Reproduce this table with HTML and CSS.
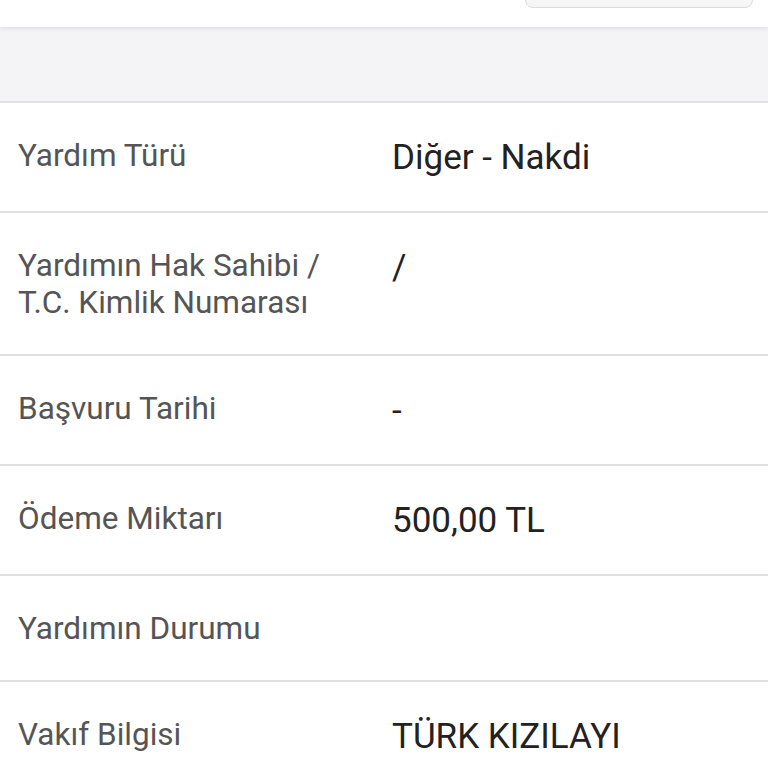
FILE: index.html
```html
<!DOCTYPE html>
<html lang="tr">
<head>
<meta charset="utf-8">
<link rel="stylesheet" href="styles.css">
</head>
<body>
<header class="topbar">
  <div class="topbar-button"></div>
</header>
<div class="band"></div>
<section class="details">
  <div class="row">
    <div class="label">Yardım Türü</div>
    <div class="value">Diğer - Nakdi</div>
  </div>
  <div class="row">
    <div class="label">Yardımın Hak Sahibi /<br>T.C. Kimlik Numarası</div>
    <div class="value">/</div>
  </div>
  <div class="row">
    <div class="label">Başvuru Tarihi</div>
    <div class="value">-</div>
  </div>
  <div class="row">
    <div class="label">Ödeme Miktarı</div>
    <div class="value">500,00 TL</div>
  </div>
  <div class="row">
    <div class="label">Yardımın Durumu</div>
    <div class="value"></div>
  </div>
  <div class="row">
    <div class="label">Vakıf Bilgisi</div>
    <div class="value">TÜRK KIZILAYI</div>
  </div>
</section>
</body>
</html>
```

FILE: styles.css
```css
* { box-sizing: border-box; }
html, body {
  margin: 0;
  padding: 0;
  background: #ffffff;
  font-family: Roboto, "Noto Sans", sans-serif;
}
.topbar {
  position: relative;
  z-index: 2;
  height: 27px;
  background: #ffffff;
  display: flex;
  justify-content: flex-end;
  padding-right: 15px;
  box-shadow: 0 2px 4px rgba(0,0,0,0.08);
}
.topbar-button {
  width: 228px;
  height: 30px;
  margin-top: -22px;
  background: #f6f6f6;
  border: 1px solid #dcdcdc;
  border-radius: 8px;
}
.band {
  height: 76px;
  background: #f4f4f6;
  border-bottom: 2px solid #e2e2e2;
}
.row {
  display: grid;
  grid-template-columns: 374px 1fr;
  align-items: start;
  padding: 34px 18px 33px;
  border-bottom: 2px solid #e0e0e0;
}
.label {
  font-size: 31.5px;
  line-height: 37px;
  color: #555555;
}
.value {
  font-size: 35px;
  line-height: 41px;
  color: #222222;
}
```
